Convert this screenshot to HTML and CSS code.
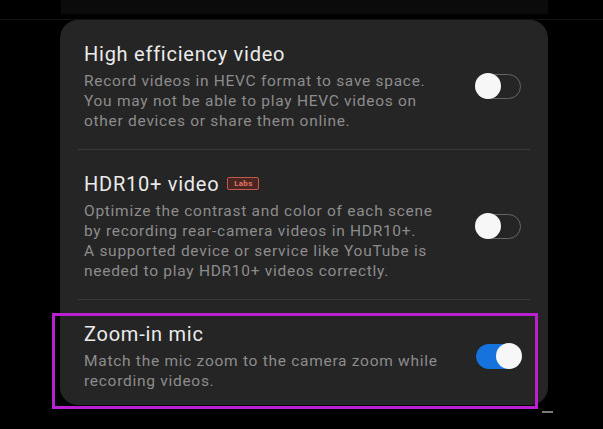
FILE: index.html
```html
<!DOCTYPE html>
<html>
<head>
<meta charset="utf-8">
<link rel="stylesheet" href="styles.css">
</head>
<body>
<div class="top-strip"></div>
<div class="rule"></div>
<div class="card">
  <div class="row">
    <div class="text">
      <div class="title">High efficiency video</div>
      <div class="desc">Record videos in HEVC format to save space.<br>You may not be able to play HEVC videos on<br>other devices or share them online.</div>
    </div>
    <div class="switch"><span class="knob"></span></div>
  </div>
  <div class="divider"></div>
  <div class="row">
    <div class="text">
      <div class="title">HDR10+ video <span class="labs">Labs</span></div>
      <div class="desc">Optimize the contrast and color of each scene<br>by recording rear-camera videos in HDR10+.<br>A supported device or service like YouTube is<br>needed to play HDR10+ videos correctly.</div>
    </div>
    <div class="switch"><span class="knob"></span></div>
  </div>
  <div class="divider"></div>
  <div class="row last">
    <div class="text">
      <div class="title">Zoom-in mic</div>
      <div class="desc">Match the mic zoom to the camera zoom while<br>recording videos.</div>
    </div>
    <div class="switch on"><span class="knob"></span></div>
  </div>
</div>
<div class="highlight"></div>
<div class="dash"></div>
</body>
</html>
```
FILE: styles.css
```css
html, body {
  margin: 0;
  padding: 0;
  background: #000;
  width: 603px;
  height: 429px;
  overflow: hidden;
  font-family: Roboto, "Noto Sans", sans-serif;
  position: relative;
}
.top-strip {
  margin-left: 61px;
  width: 487px;
  height: 14px;
  background: #0b0b0b;
}
.rule {
  margin-top: 5px;
  height: 1px;
  background: #131313;
}
.card {
  margin-left: 60px;
  width: 488px;
  height: 385px;
  background: #252525;
  border-radius: 18px;
  box-sizing: border-box;
}
.row {
  display: flex;
  align-items: center;
  justify-content: space-between;
  padding: 21px 27px 18px 24px;
}
.row.last {
  padding-bottom: 12px;
}
.title {
  font-size: 20px;
  line-height: 26px;
  color: #ebebeb;
  letter-spacing: 0.75px;
  margin-bottom: 4px;
  display: flex;
  align-items: center;
  gap: 8px;
}
.desc {
  font-size: 15.5px;
  line-height: 20px;
  color: #8c8c8c;
  letter-spacing: 0.72px;
}
.labs {
  display: inline-flex;
  align-items: center;
  justify-content: center;
  width: 32px;
  height: 13px;
  box-sizing: border-box;
  border: 1.5px solid #c25a4c;
  border-radius: 2px;
  background: #4a2622;
  color: #e07565;
  font-size: 8px;
  font-weight: 700;
  letter-spacing: 0.3px;
  line-height: 1;
  margin-top: -1px;
}
.divider {
  height: 1px;
  background: #3a3a3a;
  margin: 0 18px;
}
.switch {
  width: 45px;
  height: 25px;
  box-sizing: border-box;
  border: 1.5px solid #666;
  border-radius: 13px;
  display: flex;
  align-items: center;
  justify-content: flex-start;
  flex: none;
}
.knob {
  width: 26px;
  height: 26px;
  border-radius: 50%;
  background: #f7f7f7;
  margin-left: -2px;
  flex: none;
}
.switch.on {
  background: #1673de;
  border-color: #1673de;
  justify-content: flex-end;
}
.switch.on .knob {
  margin-left: 0;
  margin-right: -2px;
}
.highlight {
  position: absolute;
  left: 52px;
  top: 313px;
  width: 486px;
  height: 96px;
  box-sizing: border-box;
  border: 3px solid #b820d2;
}
.dash {
  position: absolute;
  left: 542px;
  top: 411px;
  width: 11px;
  height: 2px;
  background: #7a7a7a;
}
```
